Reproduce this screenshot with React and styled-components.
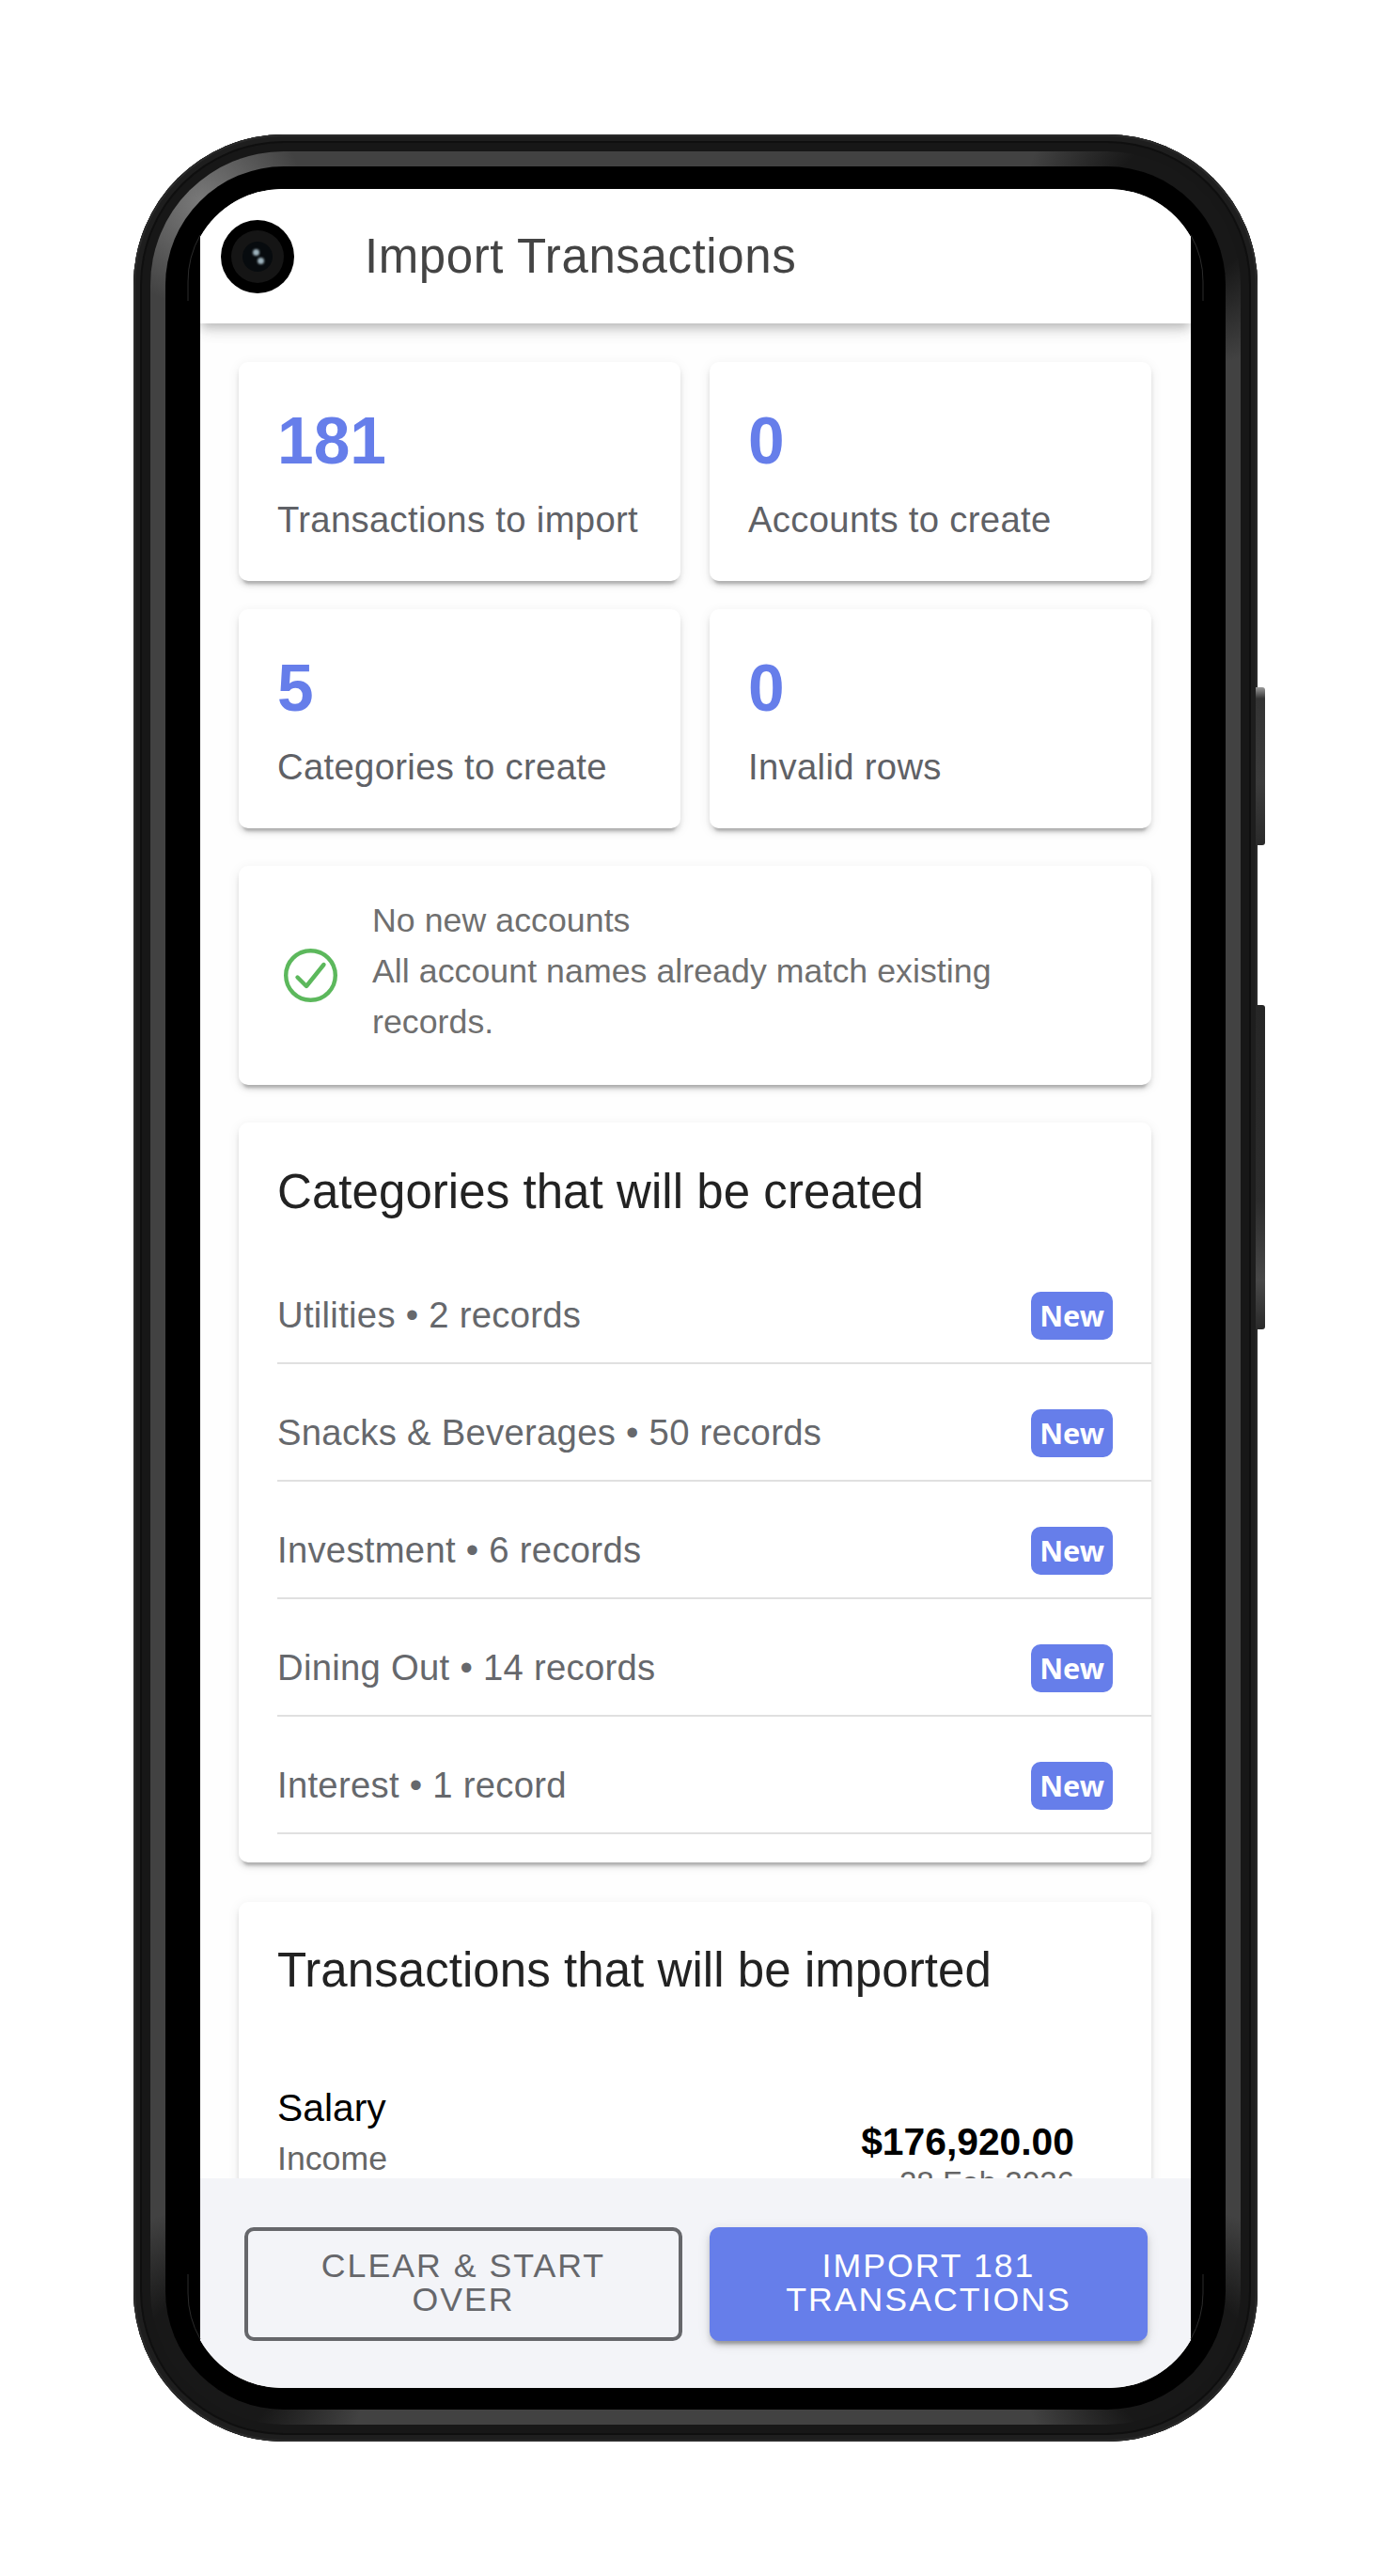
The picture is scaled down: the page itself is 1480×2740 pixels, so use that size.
import styled, { createGlobalStyle } from "styled-components";

const stats = [
  { value: "181", label: "Transactions to import" },
  { value: "0", label: "Accounts to create" },
  { value: "5", label: "Categories to create" },
  { value: "0", label: "Invalid rows" },
];

const categories = [
  "Utilities • 2 records",
  "Snacks & Beverages • 50 records",
  "Investment • 6 records",
  "Dining Out • 14 records",
  "Interest • 1 record",
];

const App = () => {
  return (
    <Page>
      <GlobalStyle />
      <Device>
        <SideKey $top={588} $height={168} $light />
        <SideKey $top={926} $height={345} />
        <Rim>
          <MetalBand>
            <BlackGlass>
              <Screen>
                <Header>
                  <Camera>
                    <CameraLens>
                      <CameraPupil>
                        <Glint $shift={-2} />
                        <Glint $shift={3} />
                      </CameraPupil>
                    </CameraLens>
                  </Camera>
                  <HeaderTitle>Import Transactions</HeaderTitle>
                </Header>
                <Content>
                  <StatGrid>
                    {stats.map((stat) => (
                      <StatCard key={stat.label}>
                        <StatValue>{stat.value}</StatValue>
                        <StatLabel>{stat.label}</StatLabel>
                      </StatCard>
                    ))}
                  </StatGrid>
                  <InfoCard>
                    <CheckIcon viewBox="0 0 57 57">
                      <circle cx="28.5" cy="28.5" r="26.3" fill="none" stroke="#5cb85c" strokeWidth="4.4" />
                      <path
                        d="M14.5 30.5 L24 40 L42.5 17"
                        fill="none"
                        stroke="#5cb85c"
                        strokeWidth="4.4"
                        strokeLinecap="round"
                        strokeLinejoin="round"
                      />
                    </CheckIcon>
                    <InfoText>
                      No new accounts
                      <br />
                      All account names already match existing records.
                    </InfoText>
                  </InfoCard>
                  <SectionCard>
                    <SectionTitle>Categories that will be created</SectionTitle>
                    <CategoryList>
                      {categories.map((name) => (
                        <CategoryRow key={name}>
                          <CategoryName>{name}</CategoryName>
                          <NewBadge>New</NewBadge>
                        </CategoryRow>
                      ))}
                    </CategoryList>
                  </SectionCard>
                  <TransactionCard>
                    <SectionTitle>Transactions that will be imported</SectionTitle>
                    <TransactionRow>
                      <div>
                        <TransactionName>Salary</TransactionName>
                        <TransactionCategory>Income</TransactionCategory>
                      </div>
                      <TransactionRight>
                        <TransactionAmount>$176,920.00</TransactionAmount>
                        <TransactionDate>28 Feb 2026</TransactionDate>
                      </TransactionRight>
                    </TransactionRow>
                  </TransactionCard>
                </Content>
                <Footer>
                  <OutlineButton>Clear &amp; Start Over</OutlineButton>
                  <FilledButton>Import 181 Transactions</FilledButton>
                </Footer>
              </Screen>
            </BlackGlass>
          </MetalBand>
        </Rim>
        <Hairlines viewBox="0 0 1196 2454">
          <path d="M71 107 A100 100 0 0 0 58 157 V177" />
          <path d="M1125 107 A100 100 0 0 1 1138 157 V177" />
          <path d="M71 2345 A100 100 0 0 1 58 2296 V2276" />
          <path d="M1125 2345 A100 100 0 0 0 1138 2296 V2276" />
        </Hairlines>
      </Device>
    </Page>
  );
};

export default App;

const GlobalStyle = createGlobalStyle`
  html, body {
    margin: 0;
    padding: 0;
    background: #ffffff;
  }
  * {
    box-sizing: border-box;
  }
`;

const Page = styled.div`
  width: 1480px;
  height: 2740px;
  padding: 143px 0 0 142px;
  background: #ffffff;
  font-family: "Liberation Sans", Arial, sans-serif;
`;

const Device = styled.div`
  position: relative;
  width: 1196px;
  height: 2454px;
`;

const SideKey = styled.div`
  position: absolute;
  right: -8px;
  top: ${(p) => p.$top}px;
  width: 10px;
  height: ${(p) => p.$height}px;
  border-radius: 0 3px 3px 0;
  background: ${(p) =>
    p.$light
      ? "linear-gradient(#9a9a9a 0, #333 12px, #3c3c3c 60%, #2a2a2a 100%)"
      : "linear-gradient(#262626, #2c2c2c 60%, #484848 85%, #2a2a2a)"};
`;

const Hairlines = styled.svg`
  position: absolute;
  inset: 0;
  width: 100%;
  height: 100%;
  fill: none;
  stroke: #2c2c2c;
  stroke-width: 1;
  pointer-events: none;
`;

const Rim = styled.div`
  height: 100%;
  padding: 18px;
  border-radius: 160px;
  background: #171717;
  box-shadow: inset 0 0 0 2px #2a2a2a, inset 0 0 0 7px #1e1e1e, inset 0 0 0 9px #0f0f0f;
`;

const MetalBand = styled.div`
  height: 100%;
  padding: 16px;
  border-radius: 142px;
  background:
    radial-gradient(circle 110px at 55px 55px, #7a7a7a 0, rgba(122, 122, 122, 0) 100%),
    radial-gradient(circle 170px at calc(100% - 60px) 60px, #181818 45%, rgba(24, 24, 24, 0) 100%),
    radial-gradient(circle 170px at 60px calc(100% - 60px), #181818 45%, rgba(24, 24, 24, 0) 100%),
    radial-gradient(circle 170px at calc(100% - 60px) calc(100% - 60px), #181818 45%, rgba(24, 24, 24, 0) 100%),
    #424242;
`;

const BlackGlass = styled.div`
  height: 100%;
  padding: 24px 37px;
  border-radius: 126px;
  background: #000000;
`;

const Screen = styled.div`
  display: flex;
  flex-direction: column;
  height: 2339px;
  background: #ffffff;
  overflow: hidden;
  clip-path: path(
    "M0 51 A100 100 0 0 1 87 0 H967 A100 100 0 0 1 1054 51 V2288 A100 100 0 0 1 967 2339 H87 A100 100 0 0 1 0 2288 Z"
  );
`;

const Header = styled.header`
  position: relative;
  z-index: 2;
  flex: none;
  display: flex;
  align-items: center;
  height: 143px;
  padding-left: 22px;
  background: #ffffff;
  box-shadow: 0 5px 10px -2px rgba(0, 0, 0, 0.2), 0 10px 13px 0 rgba(0, 0, 0, 0.08), 0 3px 25px 0 rgba(0, 0, 0, 0.05);
`;

const Camera = styled.div`
  display: flex;
  align-items: center;
  justify-content: center;
  width: 78px;
  height: 78px;
  border-radius: 50%;
  background: #000000;
`;

const CameraLens = styled.div`
  display: flex;
  align-items: center;
  justify-content: center;
  width: 56px;
  height: 56px;
  border-radius: 50%;
  background: #151515;
`;

const CameraPupil = styled.div`
  display: flex;
  flex-direction: column;
  align-items: center;
  justify-content: center;
  gap: 2px;
  width: 32px;
  height: 32px;
  border-radius: 50%;
  background: #070b0e;
`;

const Glint = styled.div`
  width: 7px;
  height: 7px;
  border-radius: 50%;
  background: #9db2bc;
  filter: blur(0.8px);
  transform: translateX(${(p) => p.$shift}px);
`;

const HeaderTitle = styled.div`
  margin-left: 75px;
  font-size: 51px;
  letter-spacing: 0.6px;
  color: #444444;
  white-space: nowrap;
`;

const Content = styled.main`
  flex: 1;
  min-height: 0;
  overflow: hidden;
  display: flex;
  flex-direction: column;
  gap: 40px;
  padding: 41px 42px 0 41px;
  background: #fefefe;
`;

const StatGrid = styled.div`
  flex: none;
  display: grid;
  grid-template-columns: 470px 470px;
  gap: 30px 31px;
`;

const Card = styled.div`
  flex: none;
  border-radius: 10px;
  background: #ffffff;
  box-shadow: 0 8px 3px -5px rgba(0, 0, 0, 0.2), 0 5px 5px 0 rgba(0, 0, 0, 0.1), 0 3px 13px 0 rgba(0, 0, 0, 0.08);
`;

const StatCard = styled(Card)`
  height: 233px;
  padding: 43px 41px 0;
`;

const StatValue = styled.div`
  font-size: 69.5px;
  line-height: 82px;
  font-weight: 700;
  color: #667eea;
`;

const StatLabel = styled.div`
  margin-top: 17px;
  font-size: 38.25px;
  line-height: 52px;
  letter-spacing: 0.32px;
  color: #5f6166;
  white-space: nowrap;
`;

const InfoCard = styled(Card)`
  display: flex;
  align-items: center;
  height: 233px;
  padding: 0 41px 0 48px;
`;

const CheckIcon = styled.svg`
  flex: none;
  width: 57px;
  height: 57px;
  margin-right: 37px;
`;

const InfoText = styled.div`
  padding-bottom: 10px;
  font-size: 35.7px;
  line-height: 54px;
  letter-spacing: 0.05px;
  color: #6f6f6f;
`;

const SectionCard = styled(Card)`
  padding: 44px 0 0 41px;
`;

const TransactionCard = styled(SectionCard)`
  margin-top: 2px;
  padding-top: 43px;
  padding-bottom: 200px;
`;

const SectionTitle = styled.div`
  font-size: 51px;
  line-height: 60px;
  letter-spacing: 0.06px;
  color: #222222;
  white-space: nowrap;
`;

const CategoryList = styled.div`
  margin-top: 28px;
  padding-bottom: 30px;
`;

const CategoryRow = styled.div`
  display: flex;
  align-items: center;
  justify-content: space-between;
  height: 125px;
  padding: 23px 41px 0 0;
  border-bottom: 2px solid #e0e0e0;
`;

const CategoryName = styled.div`
  font-size: 38.25px;
  letter-spacing: 0.28px;
  color: #66686c;
`;

const NewBadge = styled.div`
  display: flex;
  align-items: center;
  justify-content: center;
  width: 87px;
  height: 51px;
  border-radius: 10px;
  background: #667eea;
  color: #ffffff;
  font-family: "Noto Sans", sans-serif;
  font-size: 30.6px;
  font-weight: 700;
`;

const TransactionRow = styled.div`
  display: flex;
  align-items: flex-start;
  justify-content: space-between;
  margin-top: 89px;
  padding-right: 82px;
`;

const TransactionName = styled.div`
  font-size: 40.8px;
  line-height: 54px;
  color: #000000;
`;

const TransactionCategory = styled.div`
  font-size: 35.7px;
  line-height: 54px;
  color: #666666;
`;

const TransactionRight = styled.div`
  margin-top: 40px;
  text-align: right;
`;

const TransactionAmount = styled.div`
  font-size: 40.8px;
  line-height: 46px;
  font-weight: 700;
  color: #000000;
`;

const TransactionDate = styled.div`
  font-size: 33.15px;
  line-height: 42px;
  color: #666666;
`;

const Footer = styled.footer`
  position: relative;
  z-index: 2;
  flex: none;
  display: grid;
  grid-template-columns: 466px 466px;
  gap: 29px;
  height: 223px;
  padding: 52px 0 0 47px;
  background: #f3f4f8;
`;

const ActionButton = styled.button`
  height: 121px;
  padding: 0 41px 3px;
  border-radius: 10px;
  font-family: inherit;
  font-size: 35.7px;
  line-height: 36px;
  letter-spacing: 2px;
  text-transform: uppercase;
`;

const OutlineButton = styled(ActionButton)`
  border: 4px solid #66676b;
  background: transparent;
  color: #66676b;
`;

const FilledButton = styled(ActionButton)`
  border: none;
  background: #667eea;
  color: #ffffff;
  box-shadow: 0 8px 3px -5px rgba(0, 0, 0, 0.2), 0 5px 5px 0 rgba(0, 0, 0, 0.14), 0 3px 13px 0 rgba(0, 0, 0, 0.12);
`;
